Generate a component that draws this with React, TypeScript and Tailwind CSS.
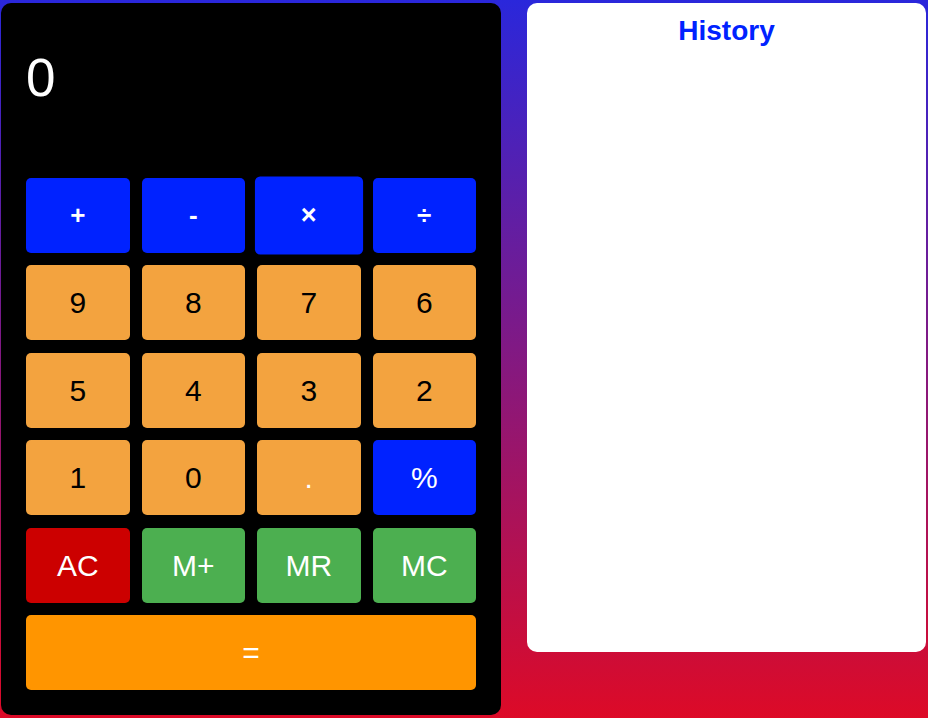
import React from "react";

type Key = { label: string; cls: string; extra?: string };

const blue = "bg-[#0022ff] text-white font-bold text-[26px]";
const orange = "bg-[#f3a33f] text-black text-[30px]";
const orangeW = "bg-[#f3a33f] text-white text-[30px]";
const green = "bg-[#4caf50] text-white text-[30px]";

const keys: Key[] = [
  { label: "+", cls: blue },
  { label: "-", cls: blue },
  { label: "×", cls: blue, extra: "scale-[1.04]" },
  { label: "÷", cls: blue },
  { label: "9", cls: orange },
  { label: "8", cls: orange },
  { label: "7", cls: orange },
  { label: "6", cls: orange },
  { label: "5", cls: orange },
  { label: "4", cls: orange },
  { label: "3", cls: orange },
  { label: "2", cls: orange },
  { label: "1", cls: orange },
  { label: "0", cls: orange },
  { label: ".", cls: orangeW },
  { label: "%", cls: "bg-[#0022ff] text-white text-[30px]" },
  { label: "AC", cls: "bg-[#cc0000] text-white text-[30px]" },
  { label: "M+", cls: green },
  { label: "MR", cls: green },
  { label: "MC", cls: green },
];

export default function App() {
  return (
    <div
      className="w-[928px] h-[718px] overflow-hidden bg-[linear-gradient(to_bottom,#2a27db,#dd0a27)] flex items-start"
      style={{ fontFamily: '"Liberation Sans", Arial, sans-serif' }}
    >
      <div className="ml-[1px] mt-[3px] w-[500px] h-[712px] bg-black rounded-[10px] px-[25px] pt-[25px] flex flex-col">
        <div className="h-[150px] pt-[20px] text-white text-[53px] leading-[59px]">0</div>
        <div className="grid grid-cols-4 gap-x-[12px] gap-y-[12.4px]">
          {keys.map((k) => (
            <button
              key={k.label}
              className={`h-[75px] rounded-[5px] flex items-center justify-center ${k.cls} ${k.extra ?? ""}`}
            >
              {k.label}
            </button>
          ))}
          <button className="col-span-4 h-[75px] rounded-[5px] bg-[#ff9500] text-white text-[30px] flex items-center justify-center">
            =
          </button>
        </div>
      </div>
      <div className="ml-[26px] mt-[3px] w-[399px] h-[649px] bg-white rounded-[10px] pt-[12px]">
        <h2 className="text-center text-[28px] leading-[32px] font-bold text-[#0022ff]">History</h2>
      </div>
    </div>
  );
}
